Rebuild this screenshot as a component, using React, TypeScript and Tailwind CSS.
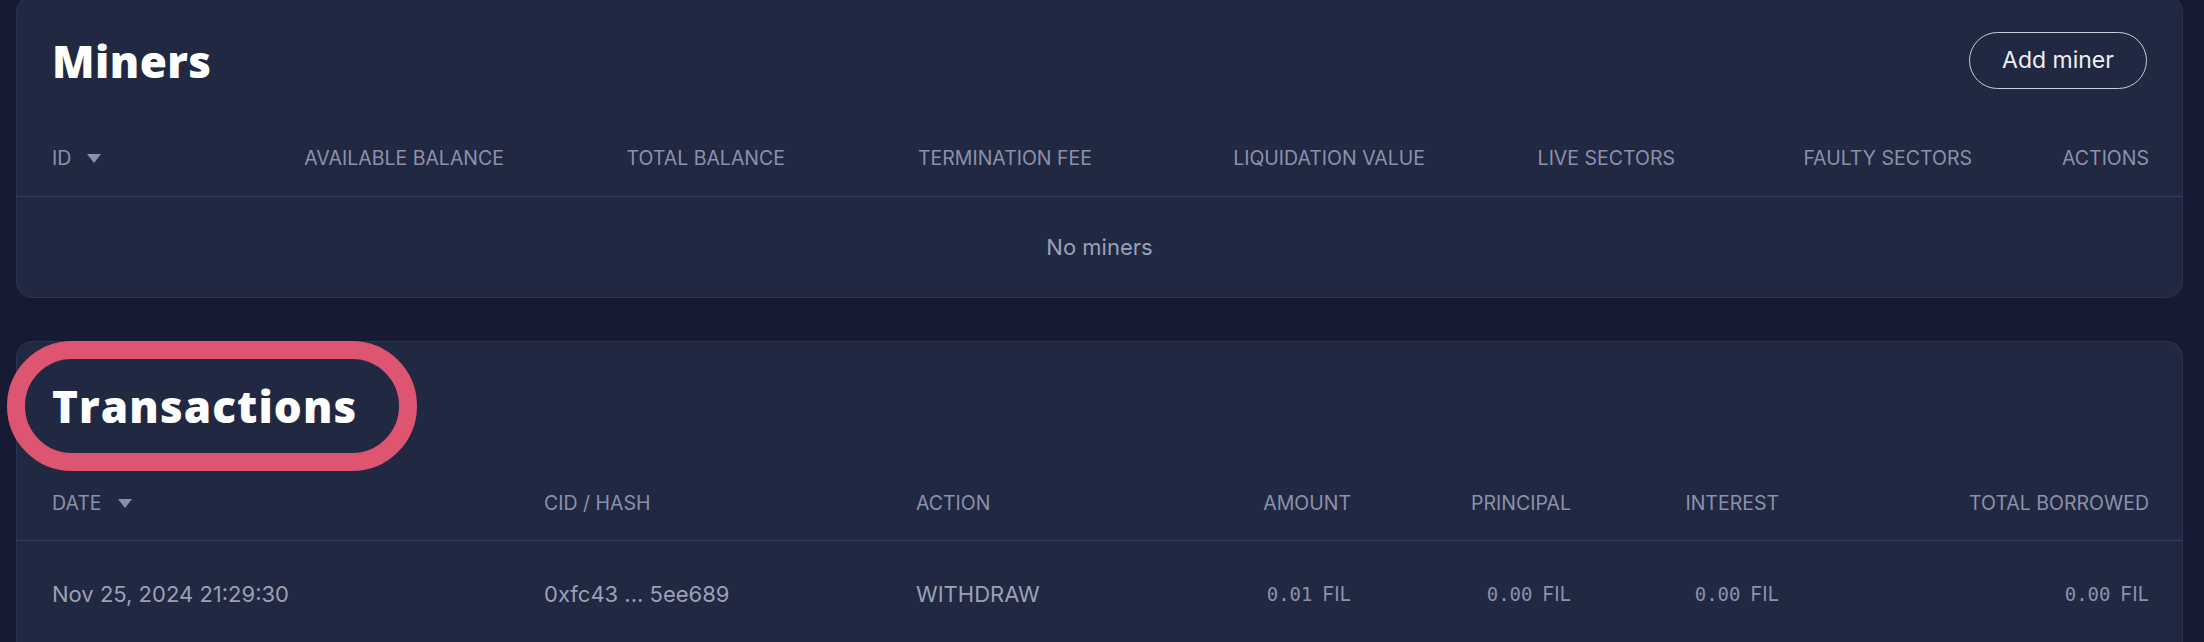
import React from 'react';

const heading = "font-['Open_Sans',sans-serif] font-extrabold text-[44px] leading-none text-white tracking-[0.01em]";
const th = "text-[19.5px] uppercase text-[#8b91ab] font-['Inter',sans-serif]";
const td = "text-[22px] text-[#9ba0b6] font-['Inter',sans-serif]";

function SortArrow() {
    return (
        <svg width="14" height="9" viewBox="0 0 14 9" className="ml-[16px] shrink-0">
            <path d="M0 0 H14 L7 9 Z" fill="#8b91ab" />
        </svg>
    );
}

function Fil({ value }: { value: string }) {
    return (
        <span className="inline-flex items-baseline gap-[10px]">
            <span className="font-['DejaVu_Sans_Mono',monospace] text-[19px] text-[#8b91ab]">{value}</span>
            <span className="font-['Inter',sans-serif] text-[20px] text-[#8b91ab]">FIL</span>
        </span>
    );
}

const minerCols = "grid grid-cols-[200px_252px_281px_307px_333px_250px_297px_177px]";
const txCols = "grid grid-cols-[492px_372px_236px_199px_220px_208px_370px]";

export default function App() {
    return (
        <div className="min-h-screen bg-[#161b33] pl-[16px] pr-[21px] overflow-hidden">
            {/* Miners */}
            <section className="-mt-[4px] bg-[#212842] border border-[#2b3350] rounded-[16px] pt-[35px]">
                <div className="flex items-center justify-between px-[35px] h-[57px]">
                    <h2 className={heading}>Miners</h2>
                    <button className="h-[57px] w-[178px] rounded-full border-[1.5px] border-[#c9ccd6] text-[23px] text-[#eef0f5] font-['Inter',sans-serif]">
                        Add miner
                    </button>
                </div>

                <div className={`${minerCols} items-center h-[76px] mt-[32px] px-[35px] border-b border-[#353e5d]`}>
                    <div className={`${th} flex items-center`}>ID <SortArrow /></div>
                    <div className={`${th} text-right`}>Available balance</div>
                    <div className={`${th} text-right`}>Total balance</div>
                    <div className={`${th} text-right`}>Termination fee</div>
                    <div className={`${th} text-right`}>Liquidation value</div>
                    <div className={`${th} text-right`}>Live sectors</div>
                    <div className={`${th} text-right`}>Faulty sectors</div>
                    <div className={`${th} text-right`}>Actions</div>
                </div>

                <div className={`h-[100px] flex items-center justify-center ${td}`}>No miners</div>
            </section>

            {/* Transactions */}
            <section className="relative mt-[43px] bg-[#212842] border border-[#2b3350] rounded-[16px] pt-[35px] pb-[40px]">
                {/* highlight annotation */}
                <div className="absolute left-[-10px] top-[-1px] w-[410px] h-[130px] rounded-full border-[18px] border-[#de5571]" />

                <div className="relative flex items-center px-[35px] h-[57px]">
                    <h2 className={`${heading} tracking-[0.025em]`}>Transactions</h2>
                </div>

                <div className={`${txCols} items-center h-[74px] mt-[33px] px-[35px] border-b border-[#353e5d]`}>
                    <div className={`${th} flex items-center`}>Date <SortArrow /></div>
                    <div className={th}>CID / Hash</div>
                    <div className={th}>Action</div>
                    <div className={`${th} text-right`}>Amount</div>
                    <div className={`${th} text-right`}>Principal</div>
                    <div className={`${th} text-right`}>Interest</div>
                    <div className={`${th} text-right`}>Total borrowed</div>
                </div>

                <div className={`${txCols} items-center h-[106px] px-[35px]`}>
                    <div className={td}>Nov 25, 2024 21:29:30</div>
                    <div className={td}>0xfc43 ... 5ee689</div>
                    <div className={td}>WITHDRAW</div>
                    <div className="text-right"><Fil value="0.01" /></div>
                    <div className="text-right"><Fil value="0.00" /></div>
                    <div className="text-right"><Fil value="0.00" /></div>
                    <div className="text-right"><Fil value="0.00" /></div>
                </div>
            </section>
        </div>
    );
}
